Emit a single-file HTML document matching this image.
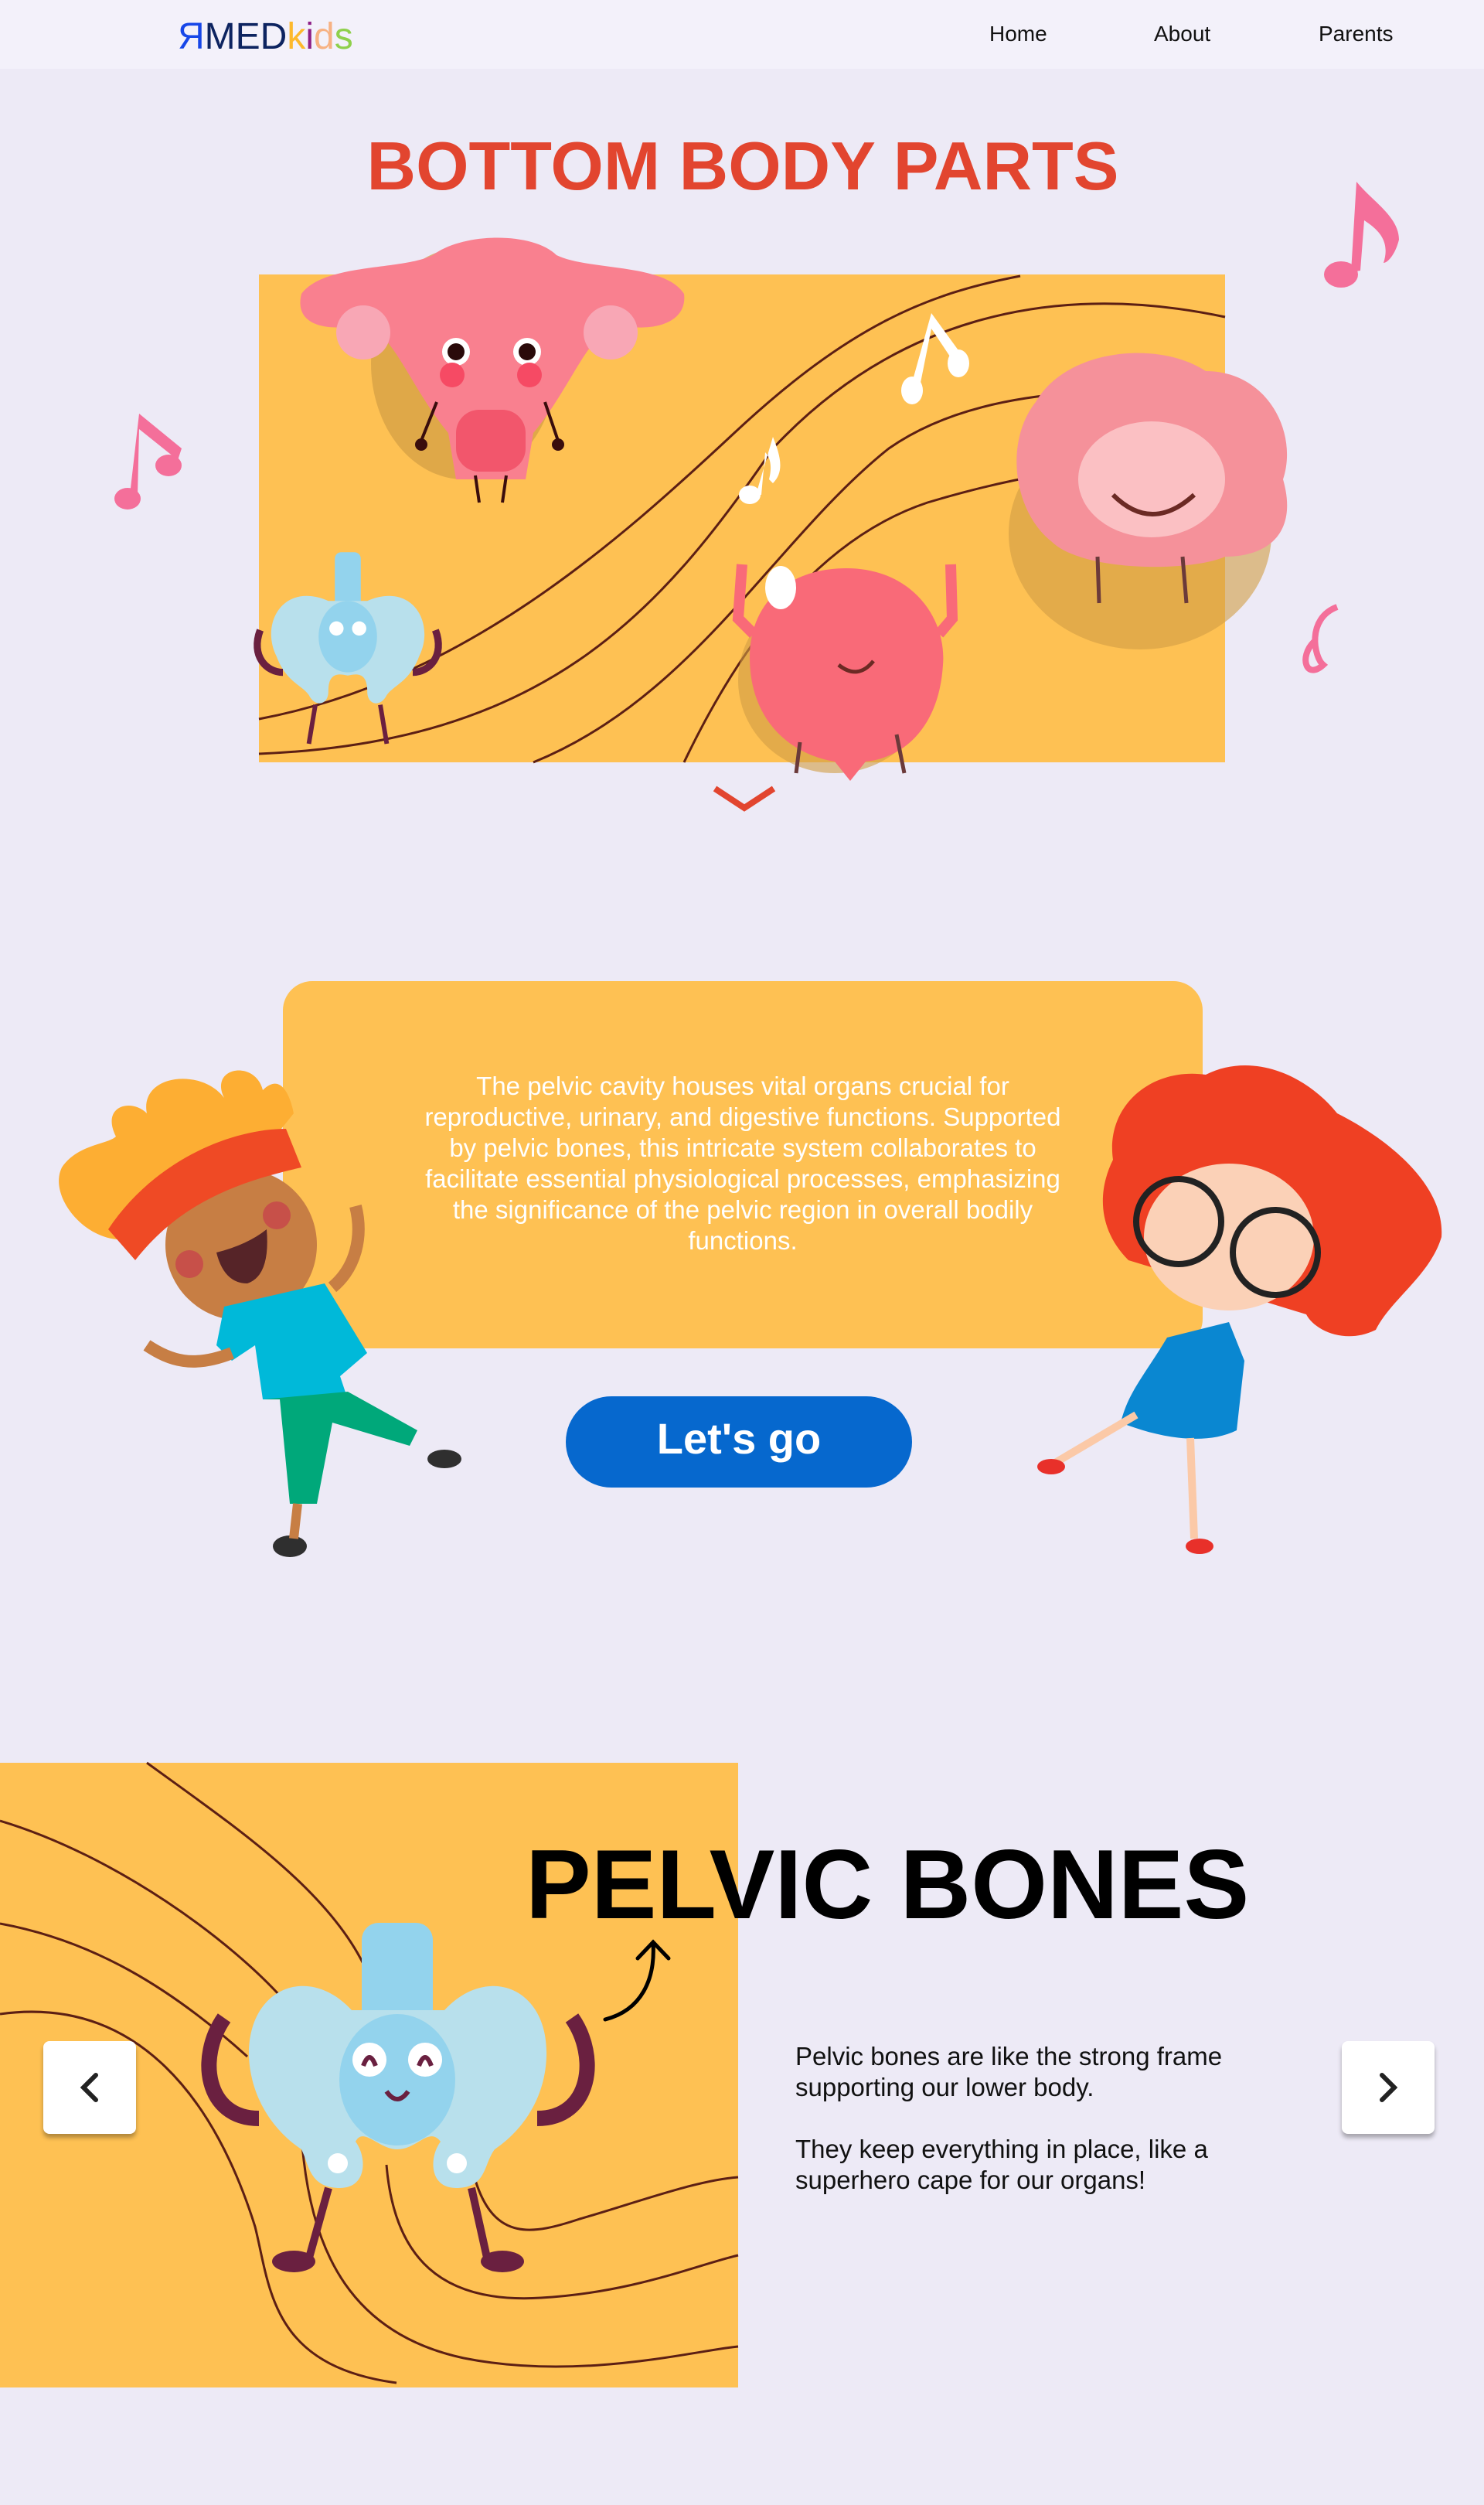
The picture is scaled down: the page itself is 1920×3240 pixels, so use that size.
<!DOCTYPE html>
<html><head><meta charset="utf-8"><style>
*{margin:0;padding:0;box-sizing:border-box}
body{width:1920px;height:3240px;background:#edeaf6;font-family:"Liberation Sans",sans-serif;position:relative;overflow:hidden}
.nav{position:absolute;left:0;top:0;width:1920px;height:89px;background:#f3f1fa}
.logo{position:absolute;left:230px;top:20px;font-size:48px;letter-spacing:0px}
.nl{position:absolute;top:28px;font-size:28px;color:#111}
.t{position:absolute;white-space:nowrap}
svg{position:absolute;left:0;top:0}
.btn{position:absolute;width:120px;height:120px;background:#fff;border-radius:8px;box-shadow:0 5px 6px rgba(0,0,0,.3)}
</style></head><body>
<svg width="1920" height="3240" viewBox="0 0 1920 3240">
<rect x="335" y="355" width="1250" height="631" fill="#fec153"/>
<g fill="none" stroke="#5c1f14" stroke-width="3">
<path d="M335 930 C600 880 800 700 950 560 C1100 420 1200 380 1320 357"/>
<path d="M335 975 C700 960 850 800 1000 580 C1150 420 1350 360 1585 410"/>
<path d="M690 986 C900 900 1000 700 1150 580 C1250 510 1400 500 1520 510"/>
<path d="M885 986 C950 850 1050 700 1200 650 C1300 620 1400 600 1520 600"/>
</g>
<g>
<ellipse cx="600" cy="470" rx="120" ry="150" fill="#d19c44" opacity=".7"/>
<path d="M390 380 C420 340 520 350 560 330 C600 300 690 300 720 330 C760 350 860 340 885 380 C890 420 840 430 800 420 C760 430 740 500 690 560 L680 620 L590 620 L580 560 C530 500 510 430 470 420 C420 430 380 420 390 380Z" fill="#f9808f"/>
<circle cx="470" cy="430" r="35" fill="#f8a7b5"/><circle cx="790" cy="430" r="35" fill="#f8a7b5"/>
<circle cx="590" cy="455" r="18" fill="#fff"/><circle cx="590" cy="455" r="11" fill="#2a0a0a"/>
<circle cx="682" cy="455" r="18" fill="#fff"/><circle cx="682" cy="455" r="11" fill="#2a0a0a"/>
<circle cx="585" cy="485" r="16" fill="#f64a64"/><circle cx="685" cy="485" r="16" fill="#f64a64"/>
<rect x="590" y="530" width="90" height="80" rx="30" fill="#f2566c"/>
<g stroke="#3a0d0d" stroke-width="4" fill="none"><path d="M565 520 L545 570"/><path d="M705 520 L722 570"/><path d="M615 615 L620 650"/><path d="M655 615 L650 650"/></g>
<circle cx="545" cy="575" r="8" fill="#3a0d0d"/><circle cx="722" cy="575" r="8" fill="#3a0d0d"/>
</g>
<ellipse cx="1475" cy="690" rx="170" ry="150" fill="#d19c44" opacity=".6"/>
<path d="M1340 520 C1380 450 1500 440 1560 480 C1640 480 1680 560 1660 620 C1680 690 1640 720 1585 720 C1540 740 1400 740 1360 700 C1310 660 1300 570 1340 520Z" fill="#f5919a"/>
<ellipse cx="1490" cy="620" rx="95" ry="75" fill="#fbc0c3"/>
<path d="M1440 640 Q1490 690 1545 640" stroke="#6b2a24" stroke-width="6" fill="none"/>
<g stroke="#6b3a3a" stroke-width="5"><path d="M1420 720 L1422 780"/><path d="M1530 720 L1535 780"/></g>
<ellipse cx="1080" cy="880" rx="125" ry="120" fill="#d19c44" opacity=".6"/>
<path d="M1095 735 C1180 735 1225 800 1220 860 C1215 940 1170 980 1120 985 L1100 1010 L1080 985 C1020 975 970 930 970 850 C970 780 1020 735 1095 735Z" fill="#f96a78"/>
<path d="M960 730 L955 800 L975 820" stroke="#f96a78" stroke-width="14" fill="none"/>
<path d="M1230 730 L1232 800 L1215 820" stroke="#f96a78" stroke-width="14" fill="none"/>
<ellipse cx="1010" cy="760" rx="20" ry="28" fill="#fff"/>
<path d="M1085 860 Q1110 880 1130 855" stroke="#6b2a24" stroke-width="5" fill="none"/>
<g stroke="#6b3a3a" stroke-width="5"><path d="M1035 960 L1030 1000"/><path d="M1160 950 L1170 1000"/></g>
<g transform="translate(450,815) scale(.42)">
<rect x="-40" y="-240" width="80" height="180" rx="20" fill="#93d3ed"/>
<path d="M-60 -90 C-200 -150 -270 -20 -220 80 C-190 160 -140 170 -120 200 C-100 240 -60 230 -60 190 C-60 140 -40 130 0 140 C40 130 60 140 60 190 C60 230 100 240 120 200 C140 170 190 160 220 80 C270 -20 200 -150 60 -90Z" fill="#b8e0ec"/>
<ellipse cx="0" cy="20" rx="90" ry="110" fill="#93d3ed"/>
<circle cx="-35" cy="-5" r="22" fill="#fff"/><circle cx="35" cy="-5" r="22" fill="#fff"/>
<path d="M-270 0 C-300 80 -250 130 -200 130" stroke="#6a2040" stroke-width="22" fill="none"/>
<path d="M270 0 C300 80 250 130 200 130" stroke="#6a2040" stroke-width="22" fill="none"/>
<path d="M-100 230 L-120 350 M100 230 L120 350" stroke="#6a2040" stroke-width="14"/>
</g>
<g fill="#fff">
<path d="M1205 405 L1245 460 L1235 470 L1205 425 L1190 500 L1180 495Z"/><ellipse cx="1180" cy="505" rx="14" ry="18"/><ellipse cx="1240" cy="470" rx="14" ry="18"/>
<path d="M1000 565 C1010 590 1015 610 1000 625 L995 620 C1000 600 995 590 990 585 L985 640 L978 640Z"/><ellipse cx="970" cy="640" rx="14" ry="12"/>
</g>
<g fill="#f46f9a">
<path d="M1755 235 C1775 260 1810 280 1810 310 C1805 330 1795 340 1790 340 C1800 310 1780 295 1765 285 L1760 350 L1748 352Z"/><ellipse cx="1735" cy="355" rx="22" ry="17"/>
<path d="M180 535 L235 580 L230 595 L180 555 L178 640 L168 640Z"/><ellipse cx="165" cy="645" rx="17" ry="14"/><ellipse cx="218" cy="602" rx="17" ry="14"/>
<path d="M1730 785 C1690 800 1700 850 1712 860 C1690 880 1680 850 1700 830" stroke="#f46f9a" stroke-width="8" fill="none"/>
</g>
<path d="M925 1020 L963 1045 L1001 1020" stroke="#e2452f" stroke-width="8" fill="none"/>
<rect x="366" y="1269" width="1190" height="475" rx="38" fill="#fec153"/>
<g>
<path d="M290 1420 C270 1380 330 1370 340 1410 C370 1380 380 1440 380 1440 L340 1490 C260 1520 200 1580 180 1600 C120 1620 60 1550 80 1510 C100 1480 140 1480 150 1470 C130 1430 170 1420 190 1440 C180 1390 260 1380 290 1420Z" fill="#fdae33"/>
<circle cx="312" cy="1610" r="98" fill="#c77e44"/>
<path d="M140 1590 C200 1500 300 1460 370 1460 L390 1510 C300 1530 230 1560 175 1630Z" fill="#ef4a25"/>
<path d="M280 1620 Q320 1610 345 1590 Q350 1650 320 1660 Q290 1660 280 1620Z" fill="#562428"/>
<circle cx="245" cy="1635" r="18" fill="#c75049"/><circle cx="358" cy="1572" r="18" fill="#c75049"/>
<path d="M290 1690 L420 1660 L475 1750 L440 1780 L450 1810 L340 1810 L330 1740 L300 1760 L280 1740Z" fill="#00b9d9"/>
<path d="M340 1810 L450 1800 L540 1850 L530 1870 L430 1840 L410 1945 L375 1945 L362 1810Z" fill="#00a87a"/>
<path d="M300 1750 C250 1770 220 1760 190 1740" stroke="#c77e44" stroke-width="16" fill="none"/>
<path d="M430 1665 C460 1640 470 1600 460 1560" stroke="#c77e44" stroke-width="16" fill="none"/>
<ellipse cx="575" cy="1887" rx="22" ry="12" fill="#2f2f2f"/><ellipse cx="375" cy="2000" rx="22" ry="14" fill="#2f2f2f"/>
<path d="M385 1945 L380 1990" stroke="#c77e44" stroke-width="12"/>
</g>
<g>
<path d="M1440 1500 C1430 1430 1490 1380 1560 1390 C1620 1360 1690 1390 1730 1440 C1790 1470 1870 1530 1865 1600 C1850 1650 1800 1680 1780 1720 C1740 1740 1700 1720 1690 1700 L1460 1630 C1420 1590 1420 1540 1440 1500Z" fill="#ef4023"/>
<ellipse cx="1590" cy="1600" rx="110" ry="95" fill="#fbd1b7"/>
<circle cx="1525" cy="1580" r="55" fill="none" stroke="#222" stroke-width="8"/>
<circle cx="1650" cy="1620" r="55" fill="none" stroke="#222" stroke-width="8"/>
<path d="M1510 1730 L1590 1710 L1610 1760 L1600 1850 C1560 1870 1500 1860 1450 1840 C1460 1800 1480 1780 1510 1730Z" fill="#0a87d1"/>
<path d="M1470 1830 L1360 1895" stroke="#fbc9a7" stroke-width="10"/><path d="M1540 1860 L1545 1990" stroke="#fbc9a7" stroke-width="10"/>
<ellipse cx="1360" cy="1897" rx="18" ry="10" fill="#e8302a"/><ellipse cx="1552" cy="2000" rx="18" ry="10" fill="#e8302a"/>
</g>
<rect x="732" y="1806" width="448" height="118" rx="59" fill="#0668ce"/>
<rect x="0" y="2280" width="955" height="808" fill="#fec153"/>
<g fill="none" stroke="#5c1f14" stroke-width="3">
<path d="M190 2280 C300 2360 420 2440 470 2540"/>
<path d="M0 2355 C150 2400 300 2510 370 2590"/>
<path d="M0 2488 C120 2510 220 2570 320 2660"/>
<path d="M0 2605 C180 2580 280 2720 330 2880 C350 2960 350 3060 513 3082"/>
<path d="M390 2760 C400 2920 460 3020 600 3050 C750 3080 900 3040 955 3035"/>
<path d="M500 2800 C510 2920 570 2980 700 2972 C820 2965 900 2930 955 2917"/>
<path d="M615 2820 C640 2900 690 2890 750 2870 C820 2850 900 2820 955 2816"/>
</g>
<g>
<rect x="468" y="2487" width="92" height="145" rx="22" fill="#93d3ed"/>
<path d="M455 2600 C400 2540 320 2570 322 2660 C325 2720 360 2760 390 2780 C400 2800 400 2830 440 2830 C475 2830 475 2790 460 2770 C470 2750 490 2780 514 2780 C540 2780 555 2750 570 2770 C555 2790 555 2830 590 2830 C630 2830 625 2800 640 2780 C670 2760 705 2720 707 2660 C710 2570 630 2540 575 2600Z" fill="#b8e0ec"/>
<ellipse cx="514" cy="2690" rx="75" ry="85" fill="#93d3ed"/>
<circle cx="478" cy="2664" r="22" fill="#fff"/><circle cx="550" cy="2664" r="22" fill="#fff"/>
<path d="M470 2672 Q478 2650 486 2672 M542 2672 Q550 2650 558 2672" stroke="#6a2040" stroke-width="6" fill="none"/>
<path d="M500 2705 Q514 2725 528 2705" stroke="#6a2040" stroke-width="6" fill="none"/>
<circle cx="437" cy="2798" r="13" fill="#fff"/><circle cx="591" cy="2798" r="13" fill="#fff"/>
<path d="M290 2610 C255 2660 265 2740 335 2740" stroke="#6a2040" stroke-width="20" fill="none"/>
<path d="M740 2610 C775 2660 765 2740 695 2740" stroke="#6a2040" stroke-width="20" fill="none"/>
<path d="M425 2830 L400 2920 M610 2830 L630 2920" stroke="#6a2040" stroke-width="10"/>
<ellipse cx="380" cy="2925" rx="28" ry="14" fill="#6a2040"/><ellipse cx="650" cy="2925" rx="28" ry="14" fill="#6a2040"/>
</g>
<path d="M783 2612 C830 2600 848 2560 845 2513 M825 2533 L845 2512 L865 2533" stroke="#000" stroke-width="5" fill="none" stroke-linecap="round"/>
</svg>
<div class="nav"></div>
<div class="logo t"><span style="color:#1747e8">Я</span><span style="color:#0d2460">MED</span><span style="color:#fdb92c">k</span><span style="color:#8e1f86">i</span><span style="color:#f7b283">d</span><span style="color:#8fd04c">s</span></div>
<div class="nl t" style="left:1280px">Home</div>
<div class="nl t" style="left:1493px">About</div>
<div class="nl t" style="left:1706px">Parents</div>
<div class="t" style="left:0;width:1920px;text-align:center;top:164px;font-size:88px;font-weight:bold;color:#e2452f;padding-left:2px">BOTTOM BODY PARTS</div>
<div class="t" style="left:366px;width:1190px;top:1385px;text-align:center;color:#fff;font-size:33px;line-height:40px;white-space:normal;padding:0 175px">The pelvic cavity houses vital organs crucial for reproductive, urinary, and digestive functions. Supported by pelvic bones, this intricate system collaborates to facilitate essential physiological processes, emphasizing the significance of the pelvic region in overall bodily functions.</div>
<div class="t" style="left:732px;width:448px;top:1828px;text-align:center;color:#fff;font-size:56px;font-weight:bold">Let's go</div>
<div class="t" style="left:680px;top:2364px;font-size:127px;font-weight:bold;color:#000">PELVIC BONES</div>
<div class="t" style="left:1029px;top:2640px;font-size:33px;line-height:40px;color:#111">Pelvic bones are like the strong frame<br>supporting our lower body.<br><br>They keep everything in place, like a<br>superhero cape for our organs!</div>
<div class="btn" style="left:56px;top:2640px"><svg width="120" height="120" style="position:static"><path d="M68 44 L52 60 L68 76" stroke="#222" stroke-width="6" fill="none" stroke-linecap="round"/></svg></div>
<div class="btn" style="left:1736px;top:2640px"><svg width="120" height="120" style="position:static"><path d="M52 44 L68 60 L52 76" stroke="#222" stroke-width="6" fill="none" stroke-linecap="round"/></svg></div>
</body></html>
